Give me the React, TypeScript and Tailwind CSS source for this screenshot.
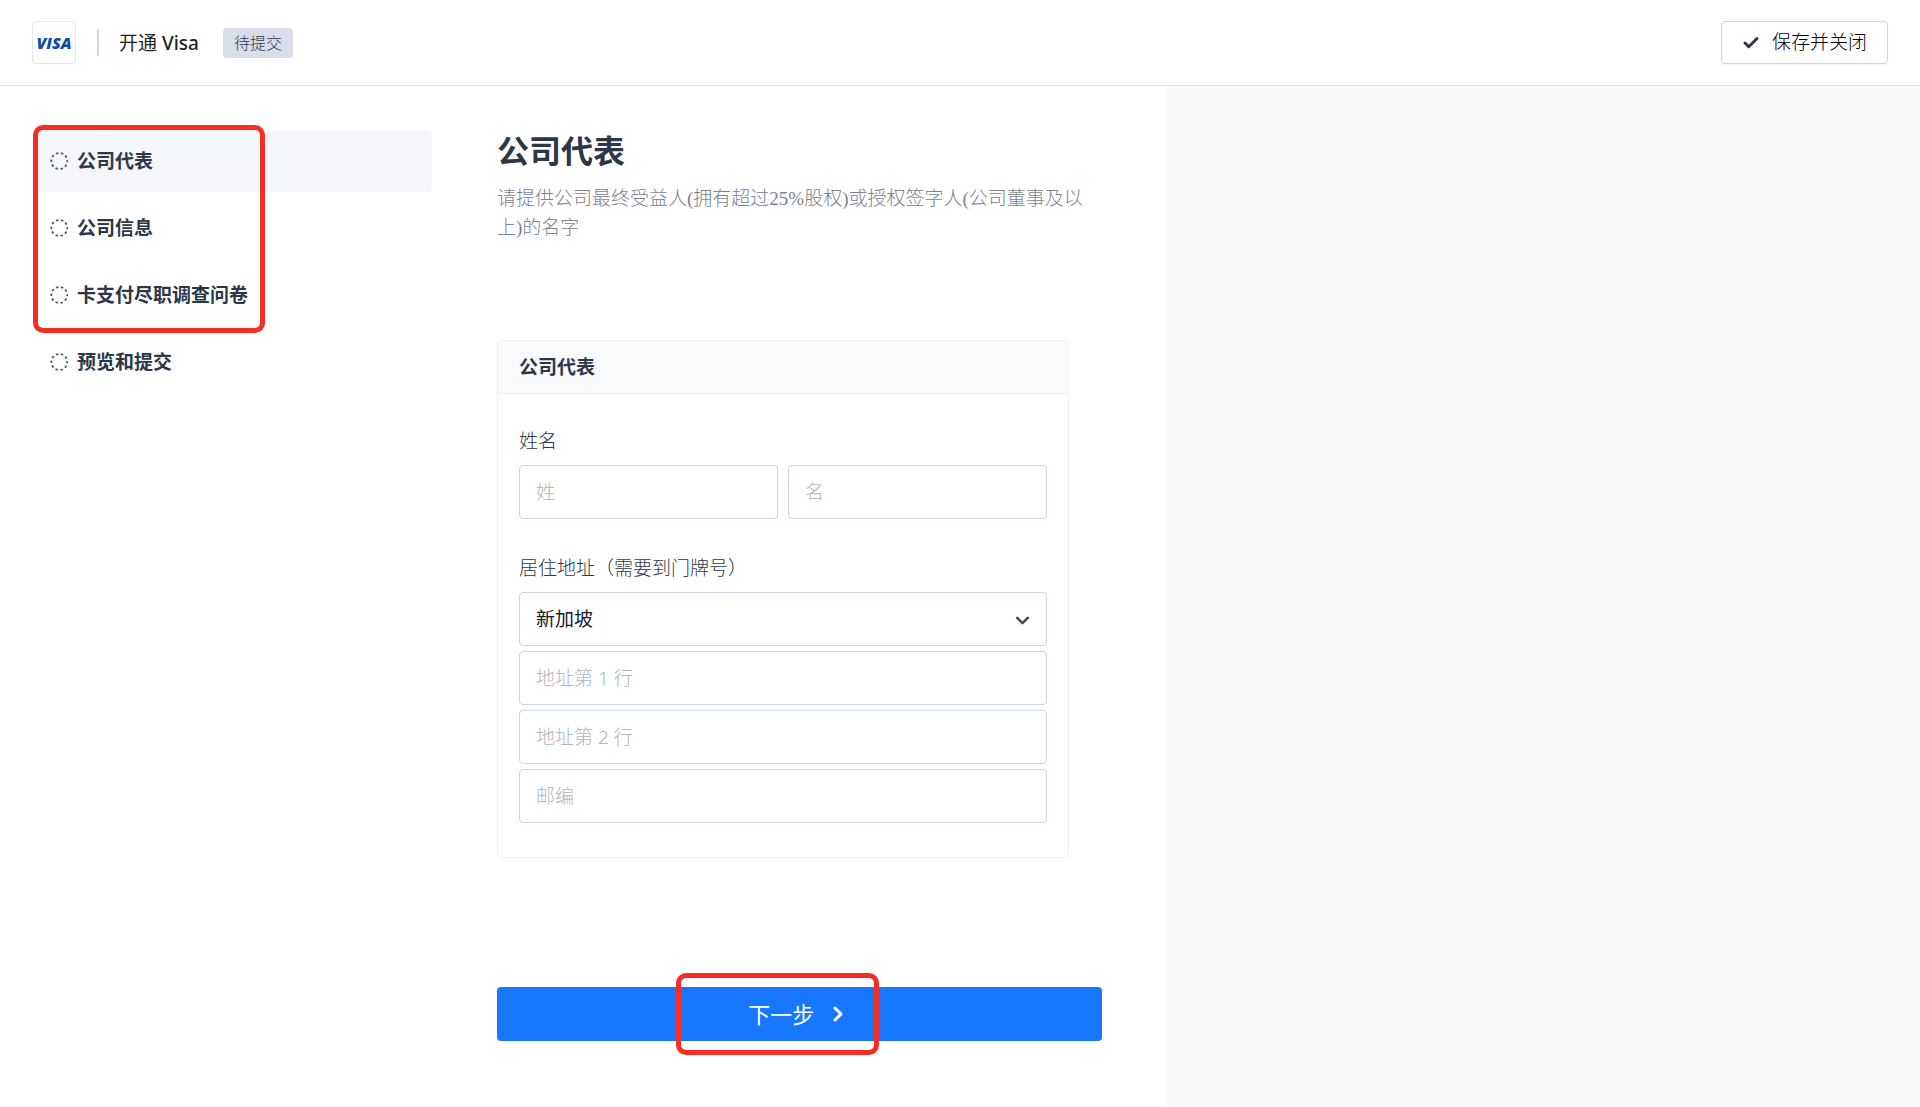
import { Check, ChevronDown, ChevronRight } from 'lucide-react';
import { useState } from 'react';

const STEPS = ['公司代表', '公司信息', '卡支付尽职调查问卷', '预览和提交'];

const FIELD =
  'h-[54px] w-full min-w-0 rounded border border-[#cbd5e5] bg-white px-4 text-[19px] text-[#1a202c] outline-none placeholder:text-[#b0b5c0] focus:border-[#1677ff]';

export default function App() {
  return (
    <div className="flex min-h-screen flex-col bg-white font-['Noto_Sans','Noto_Sans_CJK_SC',sans-serif] text-[#2d3748]">
      <Header />
      <div className="flex flex-1">
        <div className="flex min-w-0 flex-[17]">
          <Sidebar />
          <RepresentativeForm />
        </div>
        <aside className="flex-[11] bg-[#f8fafc]" />
      </div>
    </div>
  );
}

function Header() {
  return (
    <header className="flex h-[86px] items-center justify-between border-b border-[#d9dde9] px-8">
      <div className="flex items-center">
        <VisaLogo />
        <span className="ml-[21px] h-[27px] w-0.5 bg-[#cbd5e5]" />
        <h1 className="ml-5 text-[19px] font-medium leading-7 text-[#1f1f1f]">
          <span className="font-normal">开通</span> Visa
        </h1>
        <span className="ml-6 flex h-[30px] items-center rounded bg-[#d9dde8] px-[11px] text-base font-light text-[#2d3748]">
          待提交
        </span>
      </div>
      <button
        type="button"
        className="flex h-[43px] items-center gap-3 rounded border border-[#cbd5e5] bg-white px-5 text-[19px] font-light text-black shadow-xs"
      >
        <Check className="h-[18px] w-[18px] text-[#2d3748]" strokeWidth={4} />
        保存并关闭
      </button>
    </header>
  );
}

function VisaLogo() {
  return (
    <span className="flex h-[43px] w-[44px] items-center justify-center rounded border border-[#e6e8ee] bg-white font-['Open_Sans',sans-serif] text-base font-extrabold italic leading-none text-[#0b4ea2]">
      VISA
    </span>
  );
}

function Sidebar() {
  return (
    <nav className="relative ml-8 mt-[44px] w-[400px] shrink-0">
      <ul className="flex flex-col gap-[5px]">
        {STEPS.map((step, i) => (
          <li key={step}>
            <a
              href="#"
              aria-current={i === 0 ? 'step' : undefined}
              className={`flex h-[62px] items-center gap-[9px] rounded px-[18px] text-[19px] font-bold ${
                i === 0 ? 'bg-[#f4f6fa]' : ''
              }`}
            >
              <DashedCircle />
              {step}
            </a>
          </li>
        ))}
      </ul>
      <Highlight className="-top-[5px] left-px h-[208px] w-[232px]" />
    </nav>
  );
}

function DashedCircle() {
  return (
    <svg viewBox="0 0 18 18" className="h-[18px] w-[18px] shrink-0" fill="none">
      <circle
        cx="9.3"
        cy="9"
        r="8"
        stroke="#4a5568"
        strokeWidth="1.8"
        strokeDasharray="2.5 2.527"
        strokeDashoffset="1.2"
      />
    </svg>
  );
}

function Highlight({ className }: { className: string }) {
  return (
    <span
      className={`pointer-events-none absolute rounded-[10px] border-5 border-[#f52d27] ${className}`}
    />
  );
}

function RepresentativeForm() {
  const [country, setCountry] = useState('SG');

  return (
    <main className="ml-[65px] mr-16 min-w-0 flex-1 pt-[44px]">
      <h2 className="text-[32px] font-bold leading-[42px]">公司代表</h2>
      <p className="mt-3 font-['Liberation_Serif','Noto_Sans_CJK_SC',serif] text-[19px] font-light leading-[29px] text-[#7d828d]">
        请提供公司最终受益人(拥有超过25%股权)或授权签字人(公司董事及以上)的名字
      </p>

      <form onSubmit={(e) => e.preventDefault()}>
        <section className="mr-[33px] mt-[98px] rounded border border-[#f0f1f5]">
          <h3 className="flex h-[53px] items-center border-b border-[#f0f1f5] bg-[#fafbfd] px-[21px] text-[19px] font-bold">
            公司代表
          </h3>
          <div className="px-[21px] pb-[34px] pt-[33px]">
            <fieldset>
              <legend className="text-[19px] font-light leading-7 text-[#2d3748]">姓名</legend>
              <div className="mt-[10px] flex gap-[10px]">
                <input className={`${FIELD} font-light`} placeholder="姓" aria-label="姓" />
                <input className={`${FIELD} font-light`} placeholder="名" aria-label="名" />
              </div>
            </fieldset>
            <fieldset className="mt-[35px]">
              <legend className="text-[19px] font-light leading-7 text-[#2d3748]">
                居住地址（需要到门牌号）
              </legend>
              <div className="mt-[10px] flex flex-col gap-[5px]">
                <div className="relative">
                  <select
                    className={`${FIELD} appearance-none`}
                    aria-label="国家或地区"
                    value={country}
                    onChange={(e) => setCountry(e.target.value)}
                  >
                    <option value="SG">新加坡</option>
                  </select>
                  <ChevronDown
                    className="pointer-events-none absolute right-[14px] top-[18px] h-[21px] w-[21px] text-[#4d4d4d]"
                    strokeWidth={3}
                  />
                </div>
                <input className={`${FIELD} font-light`} placeholder="地址第 1 行" aria-label="地址第 1 行" />
                <input className={`${FIELD} font-light`} placeholder="地址第 2 行" aria-label="地址第 2 行" />
                <input className={`${FIELD} font-light`} placeholder="邮编" aria-label="邮编" />
              </div>
            </fieldset>
          </div>
        </section>

        <div className="relative mt-[129px]">
          <button
            type="submit"
            className="flex h-[54px] w-full items-center justify-center gap-3 rounded bg-[#1877ff] text-[22px] text-white"
          >
            下一步
            <ChevronRight className="h-6 w-6" strokeWidth={3} />
          </button>
          <Highlight className="-top-[14px] left-[179px] h-[82px] w-[203px]" />
        </div>
      </form>
    </main>
  );
}
